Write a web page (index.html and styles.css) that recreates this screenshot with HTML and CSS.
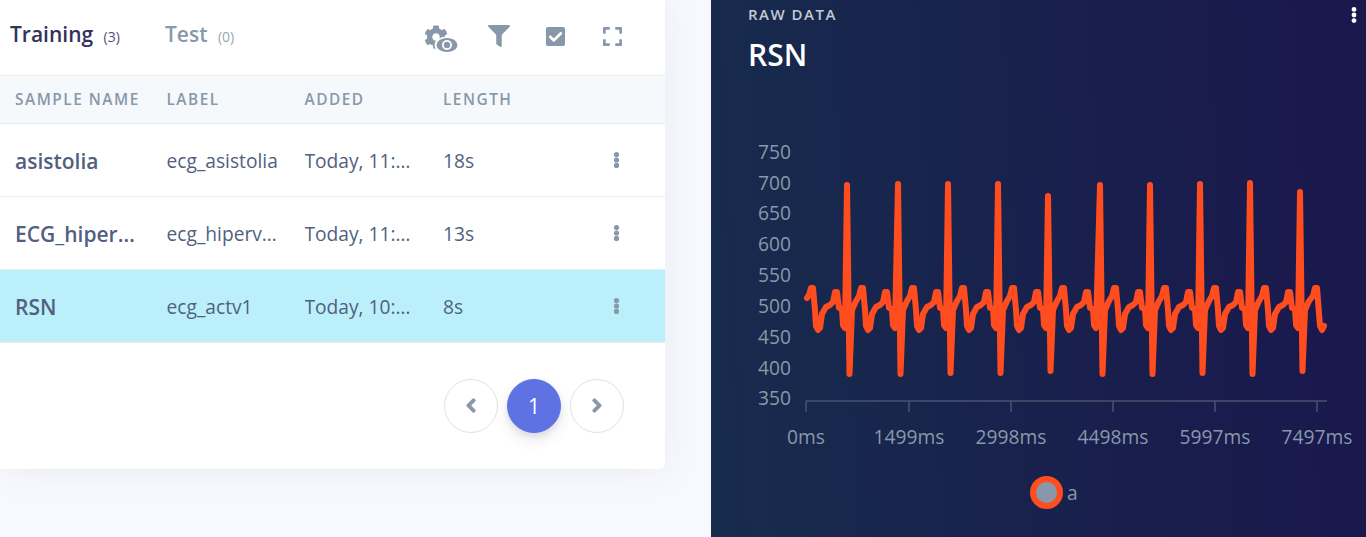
FILE: index.html
```html
<!DOCTYPE html>
<html lang="en">
<head>
    <meta charset="UTF-8">
    <meta name="viewport" content="width=device-width, initial-scale=1.0">
    <title>Data acquisition</title>
    <link rel="stylesheet" href="styles.css">
</head>
<body>
    <main class="page">
        <section class="card">
            <div class="tabs">
                <a class="tab tab-active">Training <small>(3)</small></a>
                <a class="tab">Test <small>(0)</small></a>
                <div class="tools">
                    <svg class="icon-settings" viewBox="0 0 34 28">
                        <path transform="translate(0 0) scale(.047)" d="M487.4 315.7l-42.6-24.6c4.3-23.2 4.3-47 0-70.2l42.6-24.6c4.9-2.8 7.1-8.6 5.5-14-11.1-35.6-30-67.8-54.7-94.6-3.8-4.1-10-5.1-14.8-2.3L380.8 110c-17.9-15.4-38.5-27.3-60.8-35.1V25.8c0-5.6-3.9-10.5-9.4-11.7-36.7-8.2-74.3-7.8-109.2 0-5.5 1.2-9.4 6.1-9.4 11.7V75c-22.2 7.9-42.8 19.8-60.8 35.1L88.7 85.5c-4.9-2.8-11-1.9-14.8 2.3-24.7 26.7-43.6 58.9-54.7 94.6-1.7 5.4.6 11.2 5.5 14L67.3 221c-4.3 23.2-4.3 47 0 70.2l-42.6 24.6c-4.9 2.8-7.1 8.6-5.5 14 11.1 35.6 30 67.8 54.7 94.6 3.8 4.1 10 5.1 14.8 2.3l42.6-24.6c17.9 15.4 38.5 27.3 60.8 35.1v49.2c0 5.6 3.9 10.5 9.4 11.7 36.7 8.2 74.3 7.8 109.2 0 5.5-1.2 9.4-6.1 9.4-11.7v-49.2c22.2-7.9 42.8-19.8 60.8-35.1l42.6 24.6c4.9 2.8 11 1.9 14.8-2.3 24.7-26.7 43.6-58.9 54.7-94.6 1.5-5.5-.7-11.3-5.6-14.1zM256 336c-44.1 0-80-35.9-80-80s35.9-80 80-80 80 35.9 80 80-35.9 80-80 80z"/>
                        <ellipse class="eye-halo" cx="23" cy="20" rx="12.5" ry="8.5"/>
                        <ellipse cx="23" cy="20" rx="10.5" ry="7"/>
                        <circle class="eye-white" cx="23" cy="20" r="5"/>
                        <circle cx="23" cy="20" r="3.2"/>
                    </svg>
                    <svg class="icon-filter" viewBox="0 0 512 512"><path d="M487.976 0H24.028C2.71 0-8.047 25.866 7.058 40.971L192 225.941V432c0 7.831 3.821 15.17 10.237 19.662l80 55.98C298.02 518.69 320 507.493 320 487.98V225.941l184.947-184.97C520.021 25.896 509.338 0 487.976 0z"/></svg>
                    <svg class="icon-square" viewBox="0 32 448 448"><path d="M400 480H48c-26.51 0-48-21.49-48-48V80c0-26.51 21.49-48 48-48h352c26.51 0 48 21.49 48 48v352c0 26.51-21.49 48-48 48zm-204.686-98.059l184-184c6.248-6.248 6.248-16.379 0-22.627l-22.627-22.627c-6.248-6.248-16.379-6.249-22.628 0L184 302.745l-70.059-70.059c-6.248-6.248-16.379-6.248-22.628 0l-22.627 22.627c-6.248 6.248-6.248 16.379 0 22.627l104 104c6.249 6.25 16.379 6.25 22.628.001z"/></svg>
                    <svg class="icon-square" viewBox="0 32 448 448"><path d="M0 180V56c0-13.3 10.7-24 24-24h124c6.6 0 12 5.4 12 12v40c0 6.6-5.4 12-12 12H64v84c0 6.6-5.4 12-12 12H12c-6.6 0-12-5.4-12-12zM288 44v40c0 6.6 5.4 12 12 12h84v84c0 6.6 5.4 12 12 12h40c6.6 0 12-5.4 12-12V56c0-13.3-10.7-24-24-24H300c-6.6 0-12 5.4-12 12zm148 276h-40c-6.6 0-12 5.4-12 12v84h-84c-6.6 0-12 5.4-12 12v40c0 6.6 5.4 12 12 12h124c13.3 0 24-10.7 24-24V332c0-6.6-5.4-12-12-12zM160 468v-40c0-6.6-5.4-12-12-12H64v-84c0-6.6-5.4-12-12-12H12c-6.6 0-12 5.4-12 12v124c0 13.3 10.7 24 24 24h124c6.6 0 12-5.4 12-12z"/></svg>
                </div>
            </div>

            <table class="samples">
                <thead>
                    <tr>
                        <th>Sample name</th>
                        <th>Label</th>
                        <th>Added</th>
                        <th>Length</th>
                        <th></th>
                    </tr>
                </thead>
                <tbody>
                    <tr>
                        <td class="name">asistolia</td>
                        <td>ecg_asistolia</td>
                        <td>Today, 11:32:10</td>
                        <td>18s</td>
                        <td class="more"><svg viewBox="0 0 6 16"><circle cx="3" cy="2.6" r="2.6"/><circle cx="3" cy="8" r="2.6"/><circle cx="3" cy="13.4" r="2.6"/></svg></td>
                    </tr>
                    <tr>
                        <td class="name">ECG_hiperventilacion</td>
                        <td>ecg_hiperventilacion</td>
                        <td>Today, 11:28:44</td>
                        <td>13s</td>
                        <td class="more"><svg viewBox="0 0 6 16"><circle cx="3" cy="2.6" r="2.6"/><circle cx="3" cy="8" r="2.6"/><circle cx="3" cy="13.4" r="2.6"/></svg></td>
                    </tr>
                    <tr class="selected">
                        <td class="name">RSN</td>
                        <td>ecg_actv1</td>
                        <td>Today, 10:51:02</td>
                        <td>8s</td>
                        <td class="more"><svg viewBox="0 0 6 16"><circle cx="3" cy="2.6" r="2.6"/><circle cx="3" cy="8" r="2.6"/><circle cx="3" cy="13.4" r="2.6"/></svg></td>
                    </tr>
                </tbody>
            </table>

            <nav class="pagination">
                <a class="page-link"><svg viewBox="0 0 320 512"><path d="M34.52 239.03L228.87 44.69c9.37-9.37 24.57-9.37 33.94 0l22.67 22.67c9.36 9.36 9.37 24.52.04 33.9L131.49 256l154.02 154.75c9.34 9.38 9.32 24.54-.04 33.9l-22.67 22.67c-9.37 9.37-24.57 9.37-33.94 0L34.52 272.97c-9.37-9.37-9.37-24.57 0-33.94z"/></svg></a>
                <a class="page-link page-active">1</a>
                <a class="page-link"><svg viewBox="0 0 320 512"><path d="M285.476 272.971L91.132 467.314c-9.373 9.373-24.569 9.373-33.941 0l-22.667-22.667c-9.357-9.357-9.375-24.522-.04-33.901L188.505 256 34.484 101.255c-9.335-9.379-9.317-24.544.04-33.901l22.667-22.667c9.373-9.373 24.569-9.373 33.941 0L285.475 239.03c9.373 9.372 9.373 24.568.001 33.941z"/></svg></a>
            </nav>
        </section>

        <section class="panel">
            <svg class="panel-more" viewBox="0 0 6 16"><circle cx="3" cy="2.4" r="2.4"/><circle cx="3" cy="8" r="2.4"/><circle cx="3" cy="13.6" r="2.4"/></svg>
            <h6 class="panel-kicker">Raw data</h6>
            <h2 class="panel-title">RSN</h2>

            <svg class="chart" viewBox="711 130 655 330">
                <g class="y-labels">
                    <text x="791" y="159">750</text>
                    <text x="791" y="190">700</text>
                    <text x="791" y="220">650</text>
                    <text x="791" y="251">600</text>
                    <text x="791" y="282">550</text>
                    <text x="791" y="313">500</text>
                    <text x="791" y="344">450</text>
                    <text x="791" y="375">400</text>
                    <text x="791" y="405">350</text>
                </g>
                <path class="axis" d="M806 401H1327M806 401V412M909 401V412M1011 401V412M1113 401V412M1215 401V412M1317 401V412"/>
                <g class="x-labels">
                    <text x="806" y="444">0ms</text>
                    <text x="909" y="444">1499ms</text>
                    <text x="1011" y="444">2998ms</text>
                    <text x="1113" y="444">4498ms</text>
                    <text x="1215" y="444">5997ms</text>
                    <text x="1317" y="444">7497ms</text>
                </g>
                <path id="signal" class="signal"/>
            </svg>

            <div class="legend">
                <span class="legend-dot"></span>
                <span>a</span>
            </div>
        </section>
    </main>

    <script src="chart.js"></script>
</body>
</html>
```

FILE: styles.css
```css
*{
    box-sizing: border-box;
    margin: 0;
    padding: 0;
}

body{
    background: #f8f9fe;
    color: #525f7f;
    font-family: "Open Sans", sans-serif;
    overflow: hidden;
}

.page{
    display: flex;
    height: 537px;
}

/* samples card */
.card{
    width: 665px;
    height: 469px;
    flex-shrink: 0;
    background: white;
    border-radius: 0 0 6px 0;
    box-shadow: 0 0 32px 0 rgba(136, 152, 170, .15);
}

.tabs{
    display: flex;
    align-items: center;
    height: 76px;
    padding-left: 10px;
    padding-right: 43px;
    border-bottom: 1px solid #e9ecef;
}

.tab{
    width: 155px;
    margin-top: -8px;
    color: #8898aa;
    font-size: 21px;
    font-weight: 600;
}

.tab small{
    font-size: 14px;
    font-weight: 400;
    margin-left: 5px;
    opacity: .85;
}

.tab-active{
    color: #32325d;
}

.tools{
    display: flex;
    align-items: center;
    margin-left: auto;
}

.tools svg{
    fill: #8898aa;
    display: block;
}

.icon-settings{
    width: 34px;
    height: 28px;
    margin-top: 3px;
    margin-right: 30px;
}

.tools .eye-halo,
.tools .eye-white{
    fill: white;
}

.icon-filter{
    width: 22px;
    height: 22px;
    margin-top: -3px;
    margin-right: 36px;
}

.icon-square{
    width: 19px;
    height: 19px;
    margin-top: -2px;
}

.icon-square + .icon-square{
    margin-left: 38px;
}

/* table */
.samples{
    width: 100%;
    table-layout: fixed;
    border-collapse: collapse;
}

.samples th:nth-child(1){ width: 166.5px; }
.samples th:nth-child(2){ width: 138px; }
.samples th:nth-child(3){ width: 138.5px; }
.samples th:nth-child(4){ width: 155px; }

.samples th{
    height: 47px;
    background: #f6f9fc;
    border-bottom: 1px solid #e9ecef;
    color: #8898aa;
    font-size: 15.4px;
    font-weight: 600;
    letter-spacing: 1.5px;
    text-align: left;
    text-transform: uppercase;
    white-space: nowrap;
}

.samples th:first-child,
.samples td:first-child{
    padding-left: 15px;
}

.samples td{
    height: 73px;
    padding-top: 2px;
    padding-right: 25px;
    border-bottom: 1px solid #e9ecef;
    font-size: 19.2px;
    white-space: nowrap;
    overflow: hidden;
    text-overflow: ellipsis;
}

.samples .name{
    font-size: 21px;
    font-weight: 600;
    padding-right: 30px;
}

.samples .more{
    padding: 0;
    overflow: visible;
}

.more svg{
    display: block;
    width: 7px;
    height: 16px;
    margin-left: 15px;
    fill: #8898aa;
}

.selected td{
    background: #bbf0fb;
}

/* pagination */
.pagination{
    display: flex;
    justify-content: flex-end;
    gap: 9px;
    padding-top: 36px;
    padding-right: 41px;
}

.page-link{
    display: flex;
    align-items: center;
    justify-content: center;
    width: 54px;
    height: 54px;
    border: 1px solid #dee2e6;
    border-radius: 50%;
    color: #8898aa;
    font-size: 21px;
}

.page-link svg{
    width: 10px;
    height: 15px;
    fill: #8898aa;
    stroke: #8898aa;
    stroke-width: 50;
}

.page-active{
    background: #5e72e4;
    border-color: #5e72e4;
    color: white;
    box-shadow: 0 7px 14px rgba(50, 50, 93, .1), 0 3px 6px rgba(0, 0, 0, .08);
}

/* raw data panel */
.panel{
    position: relative;
    flex: 1;
    margin-left: 46px;
    background: linear-gradient(87deg, #172b4d, #1a174d);
}

.panel-more{
    position: absolute;
    top: 7px;
    right: 9px;
    width: 6px;
    height: 16px;
    fill: white;
}

.panel-kicker{
    margin-top: 4px;
    padding-left: 37px;
    color: rgba(255, 255, 255, .75);
    font-size: 15px;
    font-weight: 600;
    letter-spacing: 1.5px;
    line-height: 20px;
    text-transform: uppercase;
}

.panel-title{
    margin-top: 11px;
    padding-left: 37px;
    color: white;
    font-size: 30px;
    font-weight: 600;
    line-height: 40px;
}

.chart{
    display: block;
    width: 655px;
    height: 330px;
    margin-top: 55px;
}

.chart text{
    fill: #8898aa;
    font-size: 19.2px;
}

.y-labels text{
    text-anchor: end;
}

.x-labels text{
    text-anchor: middle;
}

.axis{
    fill: none;
    stroke: #47536f;
    stroke-width: 1.5;
}

.signal{
    fill: none;
    stroke: #ff4d20;
    stroke-width: 6;
    stroke-linejoin: round;
    stroke-linecap: round;
}

.legend{
    display: flex;
    align-items: center;
    gap: 4px;
    margin-top: 16px;
    padding-left: 319px;
    color: #8898aa;
    font-size: 19.2px;
}

.legend-dot{
    width: 33px;
    height: 33px;
    background: #8898aa;
    border: 6px solid #ff4d20;
    border-radius: 50%;
}
```

FILE: chart.js
```js
// spike position, top and bottom of each QRS, in page pixels
const beats = [
    [847, 185, 374], [898, 184, 374], [948, 184, 373], [998, 184, 373], [1048, 196, 371],
    [1100, 185, 374], [1150, 185, 374], [1200, 184, 373], [1250, 183, 374], [1300, 192, 371]
];

// one cycle, offset from the spike: [dx, y]
const after = [[5, 310], [9, 301], [12, 296], [14, 288], [16, 288], [18, 310], [19, 326], [21, 330], [23, 328],
    [25, 314], [29, 307], [33, 305], [36, 302], [38, 292], [40, 292], [42, 308], [45, 309], [46, 325], [48, 328]];

let points = [[807, 298], [809, 295], [811, 288], [813, 288], [815, 310], [816, 326], [818, 330], [820, 328],
    [822, 314], [826, 307], [830, 305], [833, 302], [835, 292], [837, 292], [839, 308], [842, 309],
    [843, 325], [845, 328]];

beats.forEach(function (beat, i) {
    points.push([beat[0], beat[1]]);
    points.push([beat[0] + 2.5, beat[2]]);
    if (i < beats.length - 1) {
        after.forEach(function (p) {
            points.push([beat[0] + p[0], p[1]]);
        });
    }
});

points = points.concat([[1305, 310], [1309, 301], [1313, 296], [1315, 288], [1317, 288], [1320, 326], [1322, 330], [1324, 326]]);

const d = points.map(function (p, i) {
    return (i ? 'L' : 'M') + p[0] + ' ' + p[1];
}).join('');

document.querySelector('#signal').setAttribute('d', d);
```
